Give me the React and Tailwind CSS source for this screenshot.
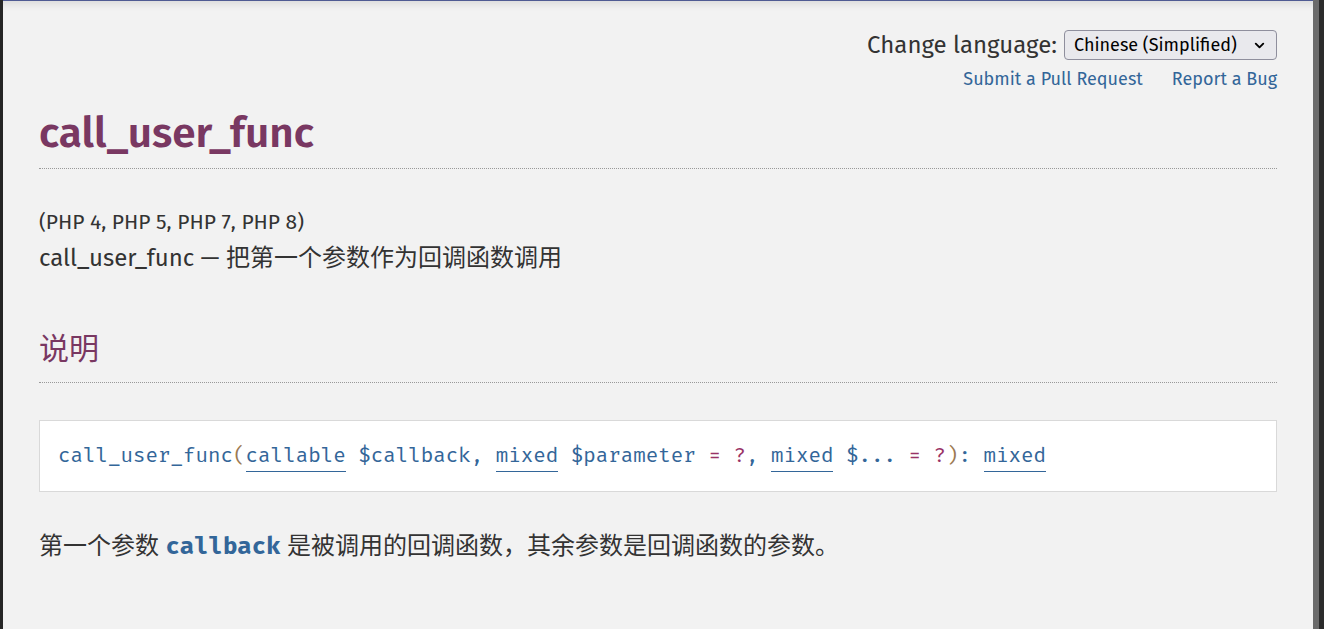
import { ChevronDown } from "lucide-react";

const sans = "font-['Fira_Sans','Noto_Sans','Noto_Sans_CJK_SC',sans-serif]";
const mono = "font-['Fira_Mono','DejaVu_Sans_Mono',monospace]";

function Type({ children }) {
  return (
    <span className="border-b border-[#336699] pb-[3px] text-[#336699]">
      {children}
    </span>
  );
}

export default function App() {
  return (
    <div className={`flex h-[629px] overflow-hidden bg-[#2b2b2b] ${sans}`}>
      <div className="w-[3px] bg-[#262626]" />

      <main className="flex-1 border-t border-[#4f5b93] bg-[#f2f2f2] px-9 text-[#333] shadow-[inset_0_10px_10px_-8px_rgba(0,0,0,0.12)]">
        {/* Language switcher */}
        <div className="flex flex-col items-end pt-[29px]">
          <div className="flex h-[30px] items-center gap-[7px]">
            <span className="text-[24px] leading-[30px]">Change language:</span>
            <div className="flex h-[30px] w-[213px] items-center justify-between rounded-[4px] border border-[#8f8f9d] bg-[#e9e9ed] pl-[9px] pr-[9px] text-[18px] text-black">
              <span>Chinese (Simplified)</span>
              <ChevronDown size={15} strokeWidth={3} />
            </div>
          </div>
          <div className="mt-[5px] flex gap-[29px] text-[18px] leading-[28px] text-[#336699]">
            <a href="#">Submit a Pull Request</a>
            <a href="#">Report a Bug</a>
          </div>
        </div>

        {/* Title */}
        <h1 className="mt-[12px] border-b border-dotted border-[#999] pb-[7px] text-[42.3px] font-semibold leading-[56px] text-[#793862]">
          call_user_func
        </h1>

        <p className="mt-[39px] text-[21px] leading-[28px]">(PHP 4, PHP 5, PHP 7, PHP 8)</p>
        <p className="mt-[4px] text-[24px] leading-[36px]">
          call_user_func — 把第一个参数作为回调函数调用
        </p>

        {/* Description */}
        <h2 className="mt-[53px] border-b border-dotted border-[#999] pb-[13px] text-[30px] leading-[40px] text-[#793862]">
          说明
        </h2>

        <div className={`mt-[37px] border border-[#d9d9d9] bg-white py-[19px] pl-[18px] text-[20.85px] leading-[32px] text-[#336699] ${mono}`}>
          call_user_func<span className="text-[#9c7a52]">(</span>
          <Type>callable</Type> $callback, <Type>mixed</Type> $parameter{" "}
          <span className="text-[#993366]">= ?</span>, <Type>mixed</Type> $...{" "}
          <span className="text-[#993366]">= ?</span>
          <span className="text-[#9c7a52]">)</span>: <Type>mixed</Type>
        </div>

        <p className="mt-[36px] text-[24px] leading-[36px]">
          第一个参数{" "}
          <code className={`font-bold text-[#336699] ${mono}`}>callback</code>{" "}
          是被调用的回调函数，其余参数是回调函数的参数。
        </p>
      </main>

      <div className="w-[6px] bg-[#6b6b6b]" />
      <div className="w-[5px] bg-[#2b2b2b]" />
    </div>
  );
}
